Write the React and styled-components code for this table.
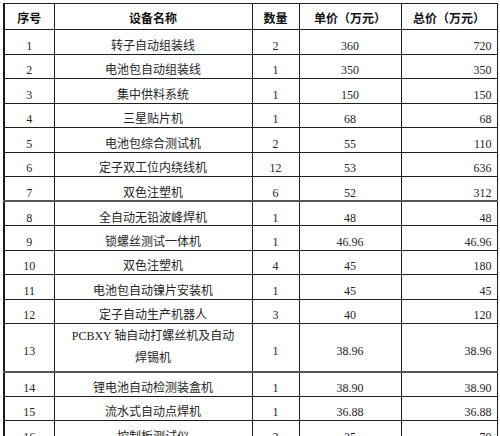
import React from "react";
import styled, { createGlobalStyle } from "styled-components";

const Global = createGlobalStyle`
  html, body {
    margin: 0;
    padding: 0;
    background: #ffffff;
    overflow: hidden;
  }
  body {
    padding: 3px 0 0 3px;
    font-family: "Liberation Serif", "Noto Sans CJK SC", serif;
  }
`;

const Table = styled.table`
  border-collapse: collapse;
  table-layout: fixed;
  width: 493px;
  border-left: 2px solid #1a1a1a;
  border-right: 1.5px solid #1a1a1a;
  color: #262626;
`;

const Col = styled.col`
  width: ${(p) => p.$w}px;
`;

const HeadRow = styled.tr`
  height: 26px;
`;

const Row = styled.tr`
  height: ${(p) => (p.$tall ? 48 : 24.5)}px;
  border-bottom: ${(p) => (p.$heavy ? "2px solid #555" : "1px solid #1f1f1f")};
`;

const HeadCell = styled.th`
  border-top: 1px solid #1f1f1f;
  border-bottom: 1px solid #1f1f1f;
  border-left: 1px solid #1f1f1f;
  font-family: "Noto Sans CJK SC", "Liberation Sans", sans-serif;
  font-weight: 700;
  font-size: 12px;
  line-height: 14px;
  color: #111;
  text-align: center;
  padding: 2px 0 0 0;
  white-space: nowrap;
`;

const Cell = styled.td`
  border-left: 1px solid #1f1f1f;
  font-family: "Liberation Serif", "Noto Sans CJK SC", serif;
  font-size: 12px;
  line-height: ${(p) => (p.$multi ? "22px" : "14px")};
  text-align: ${(p) => p.$align || "center"};
  padding: ${(p) => (p.$multi ? "0 8px 0 8px" : "8px 0 0 0")};
  padding-right: ${(p) => (p.$align === "right" ? "5px" : p.$multi ? "8px" : "0")};
  vertical-align: middle;
  white-space: ${(p) => (p.$multi ? "normal" : "nowrap")};
  overflow: hidden;
`;

const TallNum = styled(Cell)`
  padding-top: 8px;
`;

const rows = [
  ["1", "转子自动组装线", "2", "360", "720"],
  ["2", "电池包自动组装线", "1", "350", "350"],
  ["3", "集中供料系统", "1", "150", "150"],
  ["4", "三星贴片机", "1", "68", "68"],
  ["5", "电池包综合测试机", "2", "55", "110"],
  ["6", "定子双工位内绕线机", "12", "53", "636"],
  ["7", "双色注塑机", "6", "52", "312", "heavy"],
  ["8", "全自动无铅波峰焊机", "1", "48", "48"],
  ["9", "锁螺丝测试一体机", "1", "46.96", "46.96"],
  ["10", "双色注塑机", "4", "45", "180"],
  ["11", "电池包自动镍片安装机", "1", "45", "45"],
  ["12", "定子自动生产机器人", "3", "40", "120"],
  ["13", "PCBXY 轴自动打螺丝机及自动焊锡机", "1", "38.96", "38.96", "tall"],
  ["14", "锂电池自动检测装盒机", "1", "38.90", "38.90"],
  ["15", "流水式自动点焊机", "1", "36.88", "36.88"],
  ["16", "控制板测试仪", "2", "35", "70"],
];

export default function App() {
  return (
    <>
      <Global />
      <Table>
        <colgroup>
          <Col $w={50} />
          <Col $w={198} />
          <Col $w={47} />
          <Col $w={102} />
          <Col $w={96} />
        </colgroup>
        <thead>
          <HeadRow>
            <HeadCell>序号</HeadCell>
            <HeadCell>设备名称</HeadCell>
            <HeadCell>数量</HeadCell>
            <HeadCell>单价（万元）</HeadCell>
            <HeadCell>总价（万元）</HeadCell>
          </HeadRow>
        </thead>
        <tbody>
          {rows.map(([no, name, qty, price, total, flag]) => {
            const tall = flag === "tall";
            const C = tall ? TallNum : Cell;
            return (
              <Row key={no} $tall={tall} $heavy={flag === "heavy" || tall}>
                <C>{no}</C>
                {tall ? (
                  <Cell $multi>
                    PCBXY 轴自动打螺丝机及自动
                    <br />
                    焊锡机
                  </Cell>
                ) : (
                  <Cell>{name}</Cell>
                )}
                <C>{qty}</C>
                <C>{price}</C>
                <C $align="right">{total}</C>
              </Row>
            );
          })}
        </tbody>
      </Table>
    </>
  );
}
